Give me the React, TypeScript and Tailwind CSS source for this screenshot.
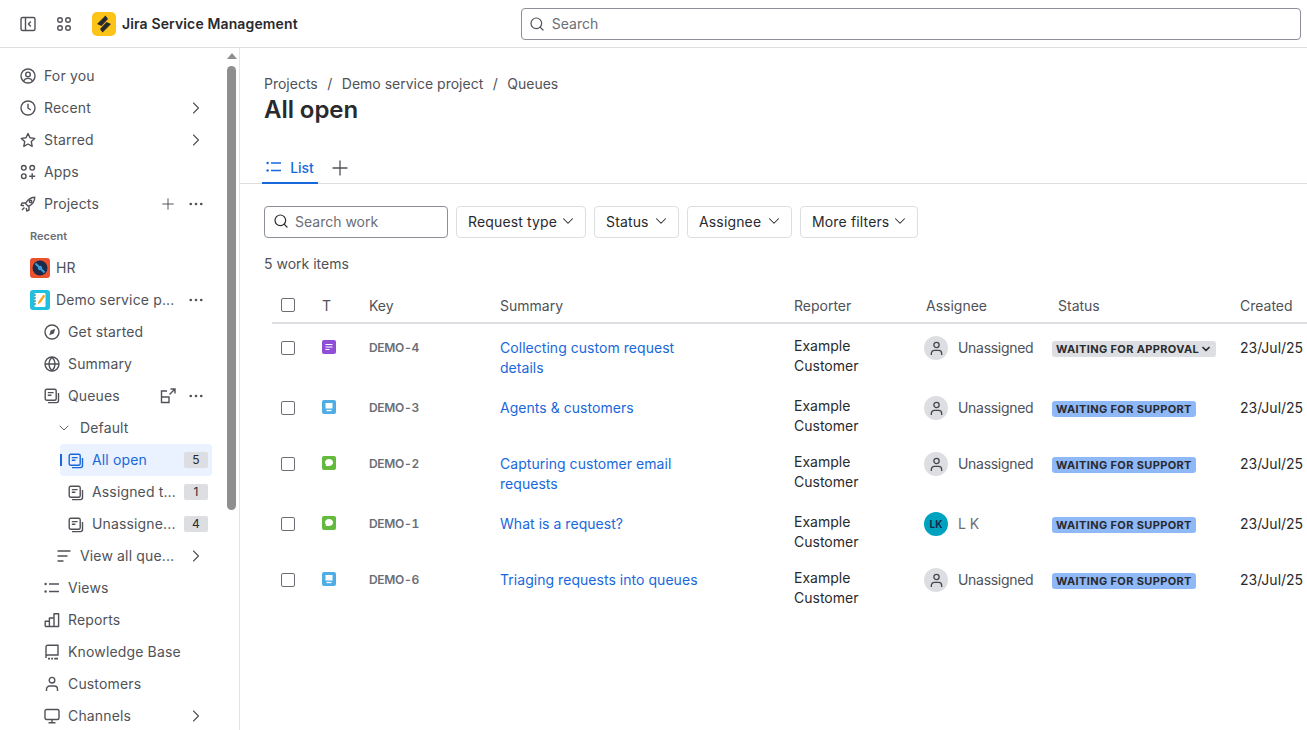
import { ChevronRight, ChevronDown, Plus, Ellipsis, Search } from "lucide-react";
import type { ReactNode } from "react";

const sans = "font-['Inter','Liberation_Sans',sans-serif]";

function Svg({ children, size = 16, className = "" }: { children: ReactNode; size?: number; className?: string }) {
  return (
    <svg width={size} height={size} viewBox="0 0 16 16" fill="none" stroke="currentColor" strokeWidth="1.4" className={`shrink-0 ${className}`}>
      {children}
    </svg>
  );
}

const QueueIcon = ({ className = "" }: { className?: string }) => (
  <Svg className={className}>
    <rect x="1.2" y="1.2" width="11" height="11" rx="1.5" />
    <path d="M3.8 4.6h5.8M3.8 7.2h3.6M4 14.6h8.5a2 2 0 0 0 2-2V5" />
  </Svg>
);

const ListIcon = ({ className = "" }: { className?: string }) => (
  <Svg className={className}>
    <path d="M5 4h10M5 11.5h10" strokeWidth="1.6" />
    <circle cx="1.6" cy="4" r="1.2" fill="currentColor" stroke="none" />
    <circle cx="1.6" cy="11.5" r="1.2" fill="currentColor" stroke="none" />
  </Svg>
);

const PersonIcon = ({ className = "", size = 16 }: { className?: string; size?: number }) => (
  <Svg className={className} size={size}>
    <circle cx="8" cy="4.2" r="2.8" />
    <path d="M2.5 15v-1.8a3.2 3.2 0 0 1 3.2-3.2h4.6a3.2 3.2 0 0 1 3.2 3.2V15" />
  </Svg>
);

const icons: Record<string, ReactNode> = {
  you: (
    <Svg>
      <circle cx="8" cy="8" r="7" />
      <circle cx="8" cy="6.4" r="2.3" />
      <path d="M3.6 13c.8-1.800 2.300-2.600 4.400-2.600s3.600.8 4.400 2.600" />
    </Svg>
  ),
  recent: (
    <Svg>
      <circle cx="8" cy="8" r="7" />
      <path d="M8 3.800V8l2.800 2" />
    </Svg>
  ),
  star: (
    <Svg>
      <path d="M8 1.500l2 4.300 4.700.6-3.400 3.200.9 4.700L8 12l-4.200 2.300.9-4.700L1.300 6.400 6 5.800z" strokeLinejoin="round" />
    </Svg>
  ),
  apps: (
    <Svg>
      <circle cx="3.800" cy="3.800" r="2.300" />
      <circle cx="12.200" cy="3.800" r="2.300" />
      <circle cx="3.800" cy="12.200" r="2.300" />
      <path d="M12.200 9.200v6M9.200 12.200h6" />
    </Svg>
  ),
  rocket: (
    <Svg>
      <path d="M5.500 7.500C7.500 3.500 10.500 1.500 14.800 1.200c-.2 4.300-2.300 7.300-6.300 9.300zM5.800 7H2l-1 2.200 3 .6M9 10.200V14l-2.200 1-.6-3M4.500 11.500l-2.500 2.500" strokeLinejoin="round" />
      <circle cx="10.600" cy="5.400" r="1.200" />
    </Svg>
  ),
  compass: (
    <Svg>
      <circle cx="8" cy="8" r="7" />
      <path d="M11.200 4.800l-1.400 4.600-4.600 1.800 1.500-4.700z" fill="currentColor" stroke="none" />
    </Svg>
  ),
  globe: (
    <Svg>
      <circle cx="8" cy="8" r="7" />
      <path d="M1 8h14M8 1c-4 4.500-4 9.500 0 14M8 1c4 4.500 4 9.500 0 14" />
    </Svg>
  ),
  lines: (
    <Svg>
      <path d="M1.500 3h13M1.500 8h10M1.500 13h6" />
    </Svg>
  ),
  reports: (
    <Svg>
      <path d="M1.200 14.500V9.200h4.200M5.400 14.500V6h4.600M10 14.500V1.800h4.600v12.700zM1.200 14.500h9" strokeLinejoin="round" />
    </Svg>
  ),
  book: (
    <Svg>
      <path d="M2 14V3a1.800 1.800 0 0 1 1.800-1.800h10.200V11H3.500A1.500 1.500 0 0 0 2 12.500" />
      <path d="M4 14.600h2M7.200 14.600h1.800M10.200 14.600H14" strokeWidth="1.800" />
    </Svg>
  ),
  monitor: (
    <Svg>
      <rect x="1" y="1.500" width="14" height="10" rx="1.500" />
      <path d="M8 11.500v3.300M4.500 14.800h7" />
    </Svg>
  ),
};

function Row({
  left,
  icon,
  label,
  chevron,
  right,
}: {
  left: number;
  icon: ReactNode;
  label: string;
  chevron?: boolean;
  right?: ReactNode;
}) {
  const pad = left === 20 ? "pl-[20px]" : left === 44 ? "pl-[44px]" : "pl-[56px]";
  return (
    <div className={`h-8 flex items-center text-[14px] tracking-[0.15px] text-[#505258] pr-[21px] ${pad}`}>
      <span className="w-4 h-5 flex items-center justify-center mr-2 shrink-0">{icon}</span>
      <span className="flex-1 whitespace-nowrap -mt-[1px]">{label}</span>
      {right}
      {chevron && <ChevronRight size={20} strokeWidth={1.3} className="shrink-0 -mr-[2px]" />}
    </div>
  );
}

const Dots = () => <Ellipsis size={18} strokeWidth={1.6} className="ml-[11px] -mr-[1px] shrink-0 text-[#505258]" />;

function CountBadge({ n }: { n: number }) {
  return <span className="w-6 h-4 bg-[#dddee1] text-[12px] leading-4 text-center text-[#292a2e] rounded-[2px] shrink-0">{n}</span>;
}

function Sidebar() {
  return (
    <aside className="w-[240px] shrink-0 border-r border-[#e3e4e6] flex overflow-hidden">
      <nav className="w-[225px] shrink-0 pt-3">
        <Row left={20} icon={icons.you} label="For you" />
        <Row left={20} icon={icons.recent} label="Recent" chevron />
        <Row left={20} icon={icons.star} label="Starred" chevron />
        <Row left={20} icon={icons.apps} label="Apps" />
        <Row left={20} icon={icons.rocket} label="Projects" right={<><Plus size={18} strokeWidth={1.3} className="shrink-0 -mx-[1px]" /><Dots /></>} />
        <div className="h-8 pl-[30px] flex items-center text-[11px] font-semibold text-[#6b6e76]">Recent</div>
        <div className="h-8 pl-[30px] pr-[21px] flex items-center text-[14px] tracking-[0.15px] text-[#505258]">
          <svg width="20" height="20" viewBox="0 0 20 20" className="mr-[6px] shrink-0">
            <rect width="20" height="20" rx="3" fill="#e9512f" />
            <circle cx="10" cy="10" r="7.500" fill="#1b2a4a" />
            <path d="M5.500 5.500l9 9" stroke="#3aa0dc" strokeWidth="2" />
            <circle cx="10" cy="10" r="2.200" fill="#3aa0dc" />
          </svg>
          <span className="flex-1 whitespace-nowrap -mt-[1px]">HR</span>
        </div>
        <div className="h-8 pl-[30px] pr-[21px] flex items-center text-[14px] tracking-[0.15px] text-[#505258]">
          <svg width="20" height="20" viewBox="0 0 20 20" className="mr-[6px] shrink-0">
            <rect width="20" height="20" rx="3" fill="#1fc0de" />
            <rect x="4.500" y="3" width="11" height="14" rx="1" fill="#fff" />
            <path d="M4 5h2M4 8h2M4 11h2M4 14h2" stroke="#12708a" strokeWidth="1" />
            <path d="M13.500 4.500l1.800 1.500-5 7-2.300.9.400-2.400z" fill="#f5a623" />
          </svg>
          <span className="flex-1 whitespace-nowrap -mt-[1px]">Demo service p...</span>
          <Dots />
        </div>
        <Row left={44} icon={icons.compass} label="Get started" />
        <Row left={44} icon={icons.globe} label="Summary" />
        <Row left={44} icon={<QueueIcon />} label="Queues" right={
          <>
            <Svg>
              <path d="M7 3H1.500v11.500H9V9H1.500M9.500 6.500L15 1M10.500 1H15v4.500" />
            </Svg>
            <Dots />
          </>
        } />
        <Row left={56} icon={<ChevronDown size={16} strokeWidth={1.4} />} label="Default" />
        <div className="ml-[60px] mr-[13px] h-8 pl-[8px] pr-[4px] flex items-center relative bg-[#e9f2fe] rounded-[4px] text-[14px] tracking-[0.15px] text-[#1868db]">
          <span className="absolute left-0 top-[10px] w-[2px] h-3 bg-[#1868db]" />
          <QueueIcon className="mr-[8px] mt-[1px]" />
          <span className="flex-1 whitespace-nowrap -mt-[1px]">All open</span>
          <CountBadge n={5} />
        </div>
        {[["Assigned t...", 1], ["Unassigne...", 4]].map(([label, n]) => (
          <div key={label} className="ml-[60px] mr-[13px] h-8 pl-[8px] pr-[4px] flex items-center text-[14px] tracking-[0.15px] text-[#505258]">
            <QueueIcon className="mr-[8px] mt-[1px]" />
            <span className="flex-1 whitespace-nowrap -mt-[1px]">{label}</span>
            <CountBadge n={n as number} />
          </div>
        ))}
        <Row left={56} icon={icons.lines} label="View all que..." chevron />
        <Row left={44} icon={<ListIcon />} label="Views" />
        <Row left={44} icon={icons.reports} label="Reports" />
        <Row left={44} icon={icons.book} label="Knowledge Base" />
        <Row left={44} icon={<PersonIcon />} label="Customers" />
        <Row left={44} icon={icons.monitor} label="Channels" chevron />
      </nav>
      <div className="w-[13px] pt-[5px] flex flex-col items-center">
        <span className="w-0 h-0 border-x-[5px] border-x-transparent border-b-[6px] border-b-[#8f8f8f]" />
        <span className="w-[9px] h-[444px] mt-[7px] bg-[#8f8f8f] rounded-full" />
      </div>
    </aside>
  );
}

function TypeIcon({ kind }: { kind: string }) {
  if (kind === "purple")
    return (
      <svg width="14" height="14" viewBox="0 0 14 14">
        <rect width="14" height="14" rx="2" fill="#8e4fd6" />
        <path d="M3.500 4.500h7M3.500 7h7M3.500 9.500h4" stroke="#fff" strokeWidth="1.200" />
      </svg>
    );
  if (kind === "blue")
    return (
      <svg width="14" height="14" viewBox="0 0 14 14">
        <rect width="14" height="14" rx="2" fill="#4fade6" />
        <rect x="3.500" y="3" width="7" height="5.500" fill="#fff" />
        <path d="M4.500 10.500h5" stroke="#fff" strokeWidth="1.300" />
      </svg>
    );
  return (
    <svg width="14" height="14" viewBox="0 0 14 14">
      <rect width="14" height="14" rx="2" fill="#63ba3c" />
      <path d="M7 3c2.300 0 4 1.500 4 3.500S9.300 10 7 10H3.500l.7-1.200C3.400 8.200 3 7.400 3 6.500 3 4.500 4.700 3 7 3z" fill="#fff" />
    </svg>
  );
}

const issues = [
  { type: "purple", key: "DEMO-4", summary: ["Collecting custom request", "details"], assignee: "", status: "WAITING FOR APPROVAL", h: "h-[60px]" },
  { type: "blue", key: "DEMO-3", summary: ["Agents & customers"], assignee: "", status: "WAITING FOR SUPPORT", h: "h-[56px]" },
  { type: "green", key: "DEMO-2", summary: ["Capturing customer email", "requests"], assignee: "", status: "WAITING FOR SUPPORT", h: "h-[60px]" },
  { type: "green", key: "DEMO-1", summary: ["What is a request?"], assignee: "LK", status: "WAITING FOR SUPPORT", h: "h-[56px]" },
  { type: "blue", key: "DEMO-6", summary: ["Triaging requests into queues"], assignee: "", status: "WAITING FOR SUPPORT", h: "h-[56px]" },
];

const cols = "grid grid-cols-[50px_47px_131px_294px_132px_132px_182px_67px]";

function Checkbox() {
  return <span className="block w-[14px] h-[14px] ml-[9px] border border-[#6b6e76] rounded-[2px]" />;
}

function FilterButton({ label, width }: { label: string; width: string }) {
  return (
    <button className={`h-8 pl-[11px] pr-[8px] pb-[2px] flex items-center justify-between border border-[#dddee1] rounded-[4px] text-[14px] tracking-[0.15px] text-[#292a2e] whitespace-nowrap ${width}`}>
      {label}
      <ChevronDown size={18} strokeWidth={1.4} />
    </button>
  );
}

function Table() {
  return (
    <div className="ml-[32px] w-[1035px] overflow-hidden">
      <div className={`${cols} h-[36px] items-center border-b-2 border-[#dddee1] text-[14px] text-[#505258]`}>
        <Checkbox />
        <span>T</span>
        <span>Key</span>
        <span>Summary</span>
        <span>Reporter</span>
        <span>Assignee</span>
        <span>Status</span>
        <span>Created</span>
      </div>
      {issues.map((it) => (
        <div key={it.key} className={`${cols} ${it.h} pt-[14px] items-start text-[14px] leading-5 text-[#292a2e]`}>
          <div className="h-5 flex items-center"><Checkbox /></div>
          <div className="h-[18px] flex items-center"><TypeIcon kind={it.type} /></div>
          <div className="h-5 flex items-center text-[12px] font-semibold tabular-nums tracking-[-0.3px] text-[#6b6e76]">{it.key}</div>
          <div className="text-[#1868db] tracking-[0.04px]">
            {it.summary.map((s) => <div key={s}>{s}</div>)}
          </div>
          <div className="-mt-[2px]">Example<br />Customer</div>
          <div className="h-5 flex items-center -ml-[2px] text-[#505258]">
            {it.assignee ? (
              <span className="w-6 h-6 mr-[10px] rounded-full bg-[#00a3bf] text-[10px] font-bold text-[#172b4d] flex items-center justify-center shrink-0">{it.assignee}</span>
            ) : (
              <span className="w-6 h-6 mr-[10px] rounded-full bg-[#dddee1] text-[#44464c] flex items-center justify-center shrink-0"><PersonIcon size={15} /></span>
            )}
            {it.assignee ? <span className="text-[#6b6e76]">L K</span> : <span className="tracking-[-0.3px]">Unassigned</span>}
          </div>
          <div className="h-5 mt-[1px] flex items-center -ml-[6px]">
            <span className={`h-4 pl-1 pr-1 flex items-center rounded-[3px] text-[11px] tracking-[0.36px] font-bold text-[#292a2e] whitespace-nowrap ${it.status.includes("APPROVAL") ? "bg-[#dddee1]" : "bg-[#8fb8f6]"}`}>
              {it.status}
              {it.status.includes("APPROVAL") && <ChevronDown size={12} strokeWidth={3.5} className="ml-[1px]" />}
            </span>
          </div>
          <div className="h-5 flex items-center whitespace-nowrap">23/Jul/25</div>
        </div>
      ))}
    </div>
  );
}

export default function App() {
  return (
    <div className={`${sans} w-[1307px] h-[730px] overflow-hidden bg-white flex flex-col`}>
      <header className="h-[48px] shrink-0 border-b border-[#dddee1] flex items-center pl-[20px] text-[#505258]">
        <Svg>
          <rect x="1" y="1.500" width="14" height="13" rx="1.500" />
          <path d="M5.500 1.500v13M10.800 5.500L8.500 8l2.300 2.500" />
        </Svg>
        <Svg className="ml-[20px]">
          <circle cx="4" cy="4" r="2.300" />
          <circle cx="12" cy="4" r="2.300" />
          <circle cx="4" cy="12" r="2.300" />
          <circle cx="12" cy="12" r="2.300" />
        </Svg>
        <svg width="24" height="24" viewBox="0 0 24 24" className="ml-[20px] shrink-0">
          <rect width="24" height="24" rx="5" fill="#fcc419" />
          <path d="M13.500 3.500L5 12l4.500 2 6.500-7zM10.500 20.500L19 12l-4.500-2L8 17z" fill="#292a2e" />
        </svg>
        <span className="ml-[6px] text-[14px] tracking-[0.13px] font-semibold text-[#292a2e] whitespace-nowrap">Jira Service Management</span>
        <div className="ml-[223px] w-[780px] h-8 border border-[#8c8f97] rounded-[4px] flex items-center pl-[7px] gap-[7px] text-[14px] text-[#6b6e76]">
          <Search size={16} strokeWidth={1.8} className="text-[#505258]" />
          Search
        </div>
      </header>
      <div className="flex-1 flex min-h-0">
        <Sidebar />
        <main className="flex-1 min-w-0 pt-[25px]">
          <div className="pl-[24px] h-5 flex items-center gap-[9.5px] text-[14px] text-[#505258]">
            <span>Projects</span><span>/</span><span>Demo service project</span><span>/</span><span>Queues</span>
          </div>
          <h1 className="pl-[24px] mt-[3px] text-[24px] leading-7 font-semibold tracking-[-0.05px] text-[#292a2e]">All open</h1>
          <div className="mt-[28px] h-[32px] border-b border-[#dddee1] pl-[22px] flex items-start">
            <div className="h-[32px] w-[56px] border-b-2 border-[#1868db] flex items-center justify-center gap-2 text-[14px] font-medium text-[#1868db]">
              <ListIcon />
              List
            </div>
            <Plus size={24} strokeWidth={1.3} className="ml-[10px] mt-[4px] text-[#505258]" />
          </div>
          <div className="mt-[22px] pl-[24px] flex gap-2">
            <div className="w-[184px] h-8 pb-[2px] border border-[#8c8f97] rounded-[4px] flex items-center pl-[8px] gap-[6px] text-[14px] text-[#6b6e76]">
              <Search size={16} strokeWidth={1.8} className="text-[#292a2e]" />
              Search work
            </div>
            <FilterButton label="Request type" width="w-[130px]" />
            <FilterButton label="Status" width="w-[85px]" />
            <FilterButton label="Assignee" width="w-[105px]" />
            <FilterButton label="More filters" width="w-[118px]" />
          </div>
          <p className="pl-[24px] mt-[16px] text-[14px] leading-5 text-[#505258]">5 work items</p>
          <div className="mt-[14px]">
            <Table />
          </div>
        </main>
      </div>
    </div>
  );
}
